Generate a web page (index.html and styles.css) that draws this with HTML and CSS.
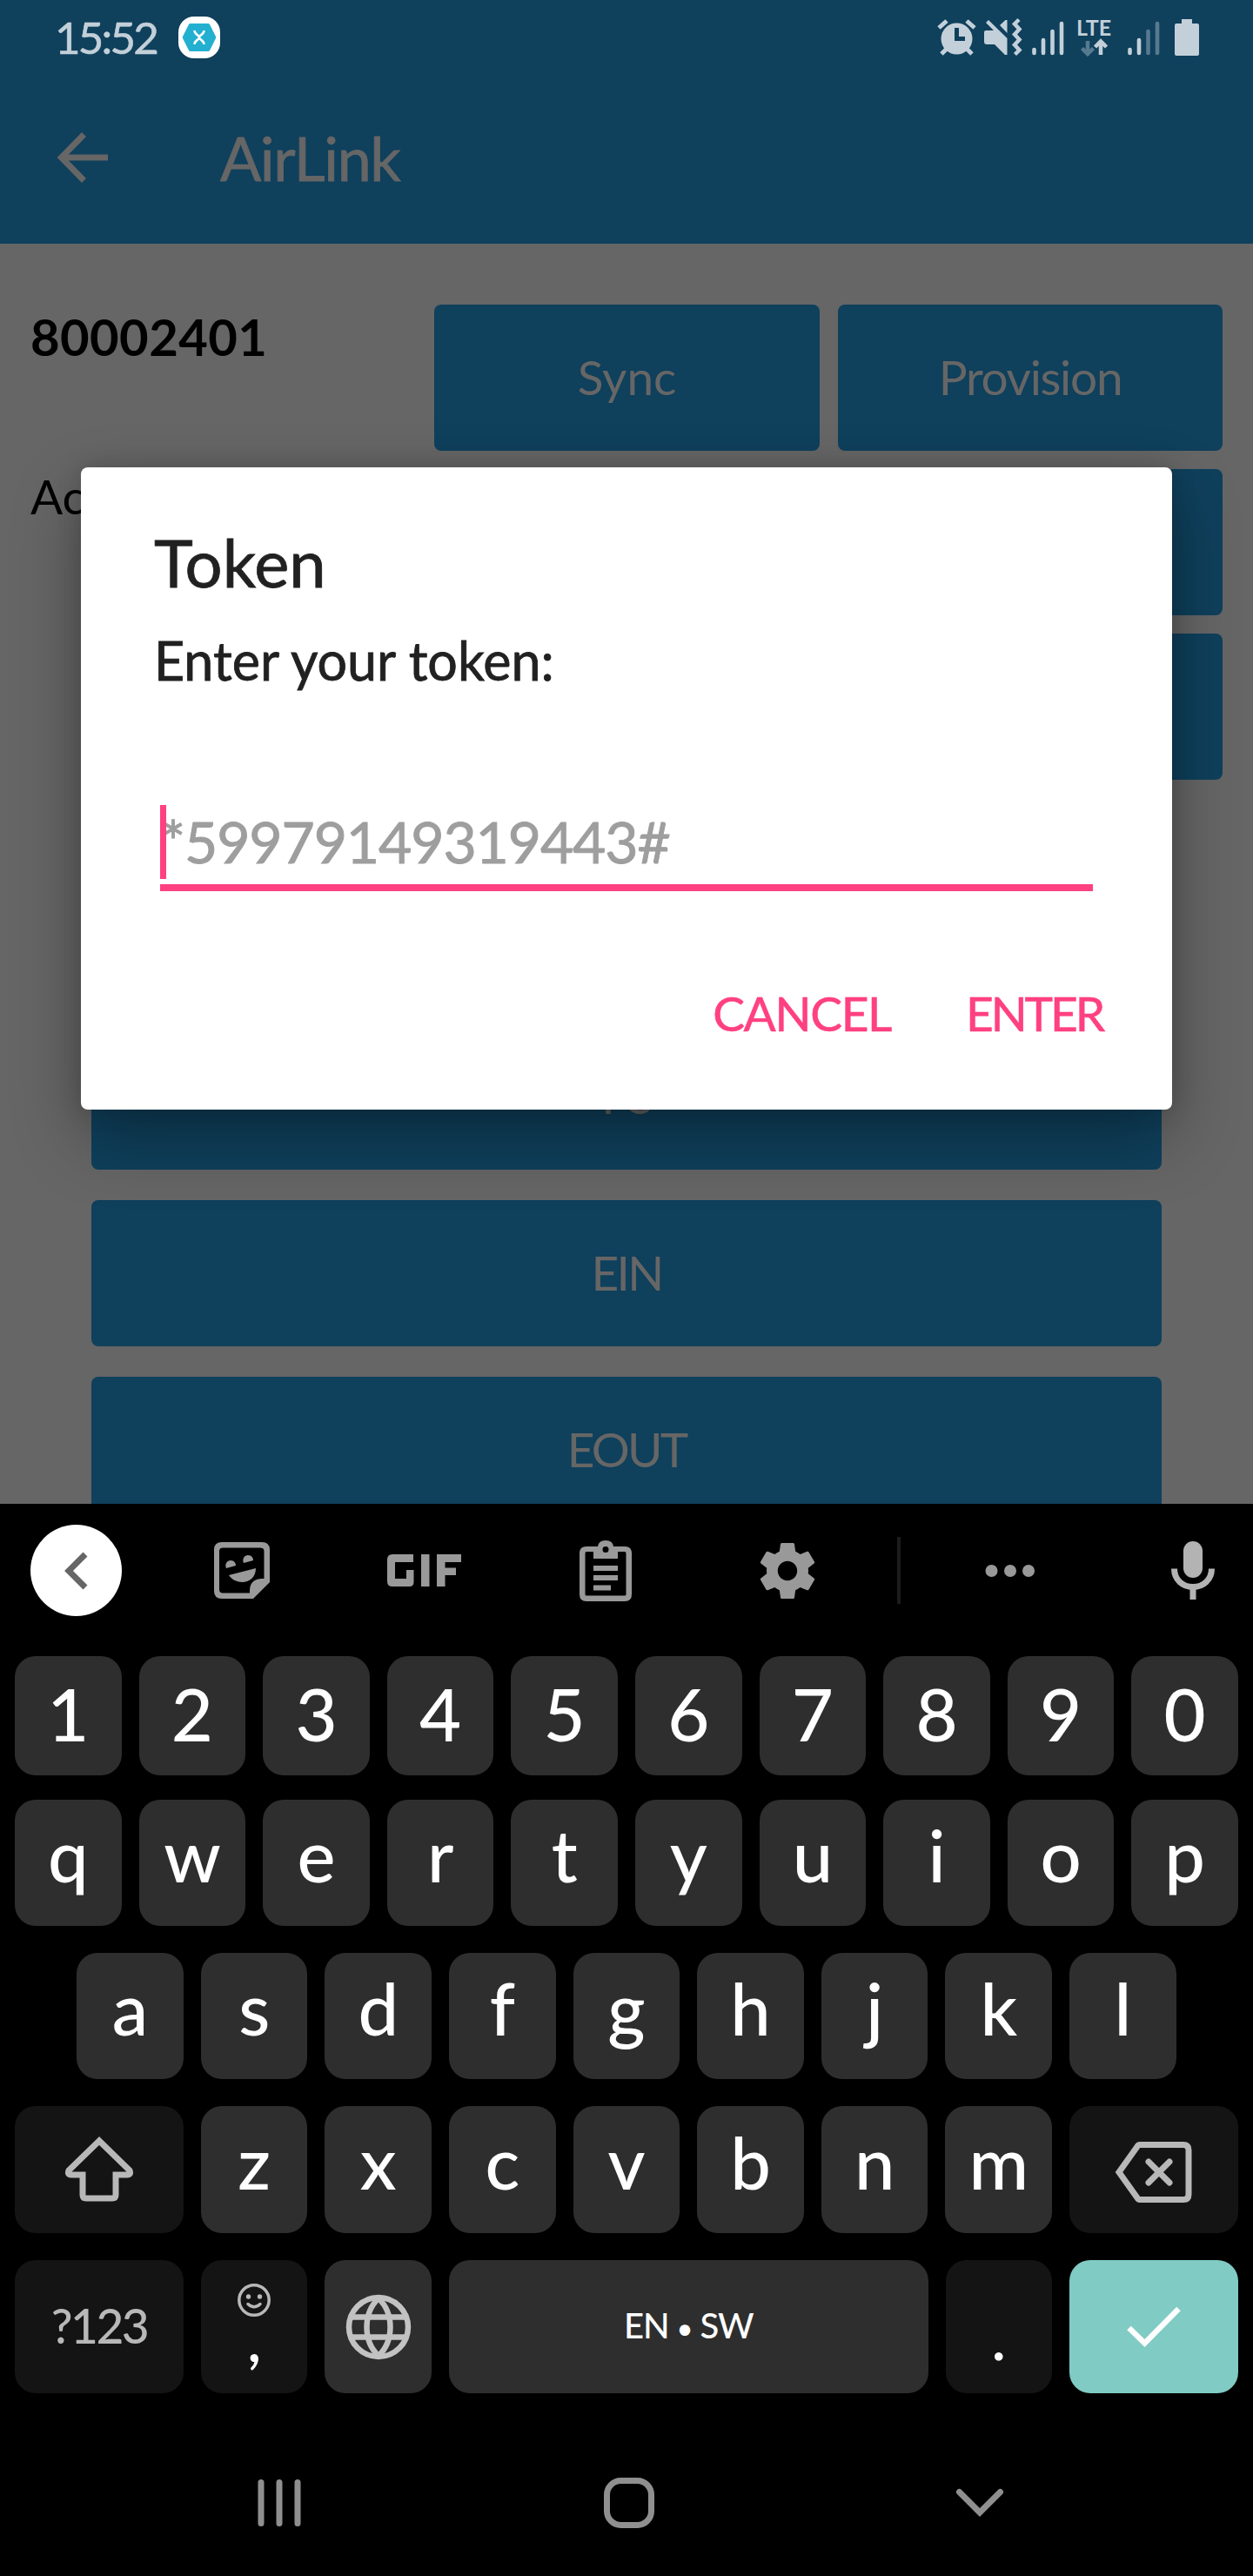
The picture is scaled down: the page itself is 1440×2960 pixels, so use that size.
FILE: index.html
```html
<!DOCTYPE html>
<html lang="en">
<head>
<meta charset="utf-8">
<title>AirLink</title>
<link rel="stylesheet" href="styles.css">
</head>
<body>
<main class="app">
  <header class="top">
    <div class="status">
      <span class="clock">15:52</span>
      <svg class="badge" width="48" height="48" viewBox="0 0 48 48"><rect width="48" height="48" rx="18" fill="#fff"/><path d="M14 8h20q1.500 0 2 1l7 14q.5 1 0 2l-7 14q-.5 1-2 1H14q-1.500 0-2-1L5 25q-.5-1 0-2l7-14q.5-1 2-1z" fill="#23b0d0"/><path d="M18.500 16c0 5 5.500 5 5.500 8s-5.500 3-5.500 8M29.500 16c0 5-5.500 5-5.500 8s5.500 3 5.500 8" fill="none" stroke="#fff" stroke-width="2.500"/></svg>
      <div class="status-icons">
        <svg width="45" height="42" viewBox="0 0 45 42"><circle cx="22.500" cy="22.500" r="18" fill="#c3d0d9"/><path d="M2 10 11 2M34 2l9 8M11 34l-6 6M34 34l6 6" stroke="#c3d0d9" stroke-width="5" fill="none"/><path d="M22.500 10v12.500H32" stroke="#0f405c" stroke-width="5" fill="none"/></svg>
        <svg class="mute" width="43" height="42" viewBox="0 0 43 42"><path d="M2 13h9L2 4l3-3 21.500 21V41H24L12 29H3q-3 0-3-3V15q0-2 2-2zM18 7l6.500-6h2v15z" fill="#c3d0d9"/><path d="M40 1l-5 5 5.500 6-5.500 6 5.500 6-5.500 6 5.500 6-5 5" transform="translate(0 -.5)" stroke="#c3d0d9" stroke-width="4.500" fill="none"/></svg>
        <svg class="signal" width="38" height="42" viewBox="0 0 38 42"><path d="M2.500 35v4M13 24v15M23.500 14v25M34 5v34" stroke="#c3d0d9" stroke-width="4.600" stroke-linecap="round"/></svg>
        <div class="lte"><span>LTE</span>
          <svg width="31" height="20" viewBox="0 0 31 20"><path d="M8 2v15M1.500 10.500 8 17l6.500-6.500" stroke="#577a90" stroke-width="4.500" fill="none"/><path d="M23 18V3M16.500 9 23 2.500 29.500 9" stroke="#c3d0d9" stroke-width="4.500" fill="none"/></svg>
        </div>
        <svg class="signal2" width="38" height="42" viewBox="0 0 38 42"><path d="M2.500 35v4M13 24v15" stroke="#c3d0d9" stroke-width="4.600" stroke-linecap="round"/><path d="M23.500 14v25M34 5v34" stroke="#577a90" stroke-width="4.600" stroke-linecap="round"/></svg>
        <svg class="battery" width="28" height="42" viewBox="0 0 28 42"><path d="M8 0h12v5h6q2 0 2 2v33q0 2-2 2H2q-2 0-2-2V7q0-2 2-2h6z" fill="#c3d0d9"/></svg>
      </div>
    </div>
    <div class="toolbar">
      <svg width="58" height="58" viewBox="0 0 58 58"><path d="M57 29H6M29.500 2.500 3.500 29l26 26.500" stroke="#666" stroke-width="7" fill="none"/></svg>
      <h1>AirLink</h1>
    </div>
  </header>

  <section class="content">
    <div class="meter">
      <div class="info"><strong>80002401</strong><span>Active</span></div>
      <div class="actions">
        <button class="btn">Sync</button><button class="btn prov">Provision</button>
        <button class="btn"></button><button class="btn"></button>
        <button class="btn"></button><button class="btn"></button>
      </div>
    </div>
    <div class="list">
      <button class="btn">PS</button>
      <button class="btn">EIN</button>
      <button class="btn">EOUT</button>
    </div>
  </section>

  <div class="dialog" role="dialog">
    <h2>Token</h2>
    <p>Enter your token:</p>
    <div class="field"><span class="hint">*59979149319443#</span><span class="caret"></span></div>
    <div class="dialog-actions"><span class="cancel">CANCEL</span><span class="enter">ENTER</span></div>
  </div>
</main>

<section class="keyboard">
  <div class="tools">
    <span class="back"><svg width="28" height="44" viewBox="0 0 28 44"><path d="M24 3 5 22l19 19" stroke="#666" stroke-width="7" fill="none"/></svg></span>
    <svg class="sticker" width="66" height="66" viewBox="0 0 66 66"><path fill="#999" fill-rule="evenodd" d="M10 0h46q9 0 9 9v37L46 65H10q-9 0-9-9V9q0-9 9-9zm1 6.500q-4 0-4 4v44q0 4 4 4h31V56q0-13 13-14h3.500V10.500q0-4-4-4z"/><path fill="#999" d="M15 30c-2-5 1-9 5-9s6 3 6 6zM35 24c-2-5 1-9 5-9s6 3 6 6zM18 38l31-8c0 18-22 21-31 8z"/></svg>
    <svg class="gif" width="85" height="38" viewBox="0 0 85 38"><path fill="#999" d="M6 0h24v9H9v19h13V18h8.500v14q0 5-5 5H6q-6 0-6-6V6q0-6 6-6zM39 0h9.500v37H39zM57 0h28v9H66.500v6.500H79V24H66.500v13H57z"/></svg>
    <svg class="clip" width="60" height="70" viewBox="0 0 60 70"><path fill="#999" fill-rule="evenodd" d="M8 7h13q1-7 9-7t9 7h13q8 0 8 8v47q0 8-8 8H8q-8 0-8-8V15q0-8 8-8zm0 6q-1.500 0-1.500 2v47q0 1.500 1.500 1.500h44q1.500 0 1.500-1.500V15q0-2-1.500-2h-8v8H16v-8zM30 7a3.500 3.500 0 1 0 0 7 3.500 3.500 0 0 0 0-7z"/><path fill="#999" d="M16 29h28v6H16zM16 40h28v6H16zM16 51.500h20v6H16z"/></svg>
    <svg class="gear" width="64" height="64" viewBox="2 2 20 20"><path fill="#999" d="M19.430 12.980c.04-.32.070-.64.070-.98s-.03-.66-.07-.98l2.110-1.650c.19-.15.240-.42.120-.64l-2-3.460c-.12-.22-.39-.3-.61-.22l-2.490 1c-.52-.4-1.080-.73-1.690-.98l-.38-2.650C14.460 2.180 14.250 2 14 2h-4c-.25 0-.46.180-.49.420l-.38 2.650c-.61.250-1.170.590-1.690.980l-2.490-1c-.23-.09-.49 0-.61.220l-2 3.460c-.13.220-.07.490.120.640l2.110 1.650c-.04.320-.07.650-.07.980s.03.660.070.980l-2.110 1.650c-.19.150-.24.420-.12.640l2 3.460c.12.220.390.300.610.220l2.490-1c.52.400 1.080.730 1.690.980l.38 2.650c.03.240.240.420.490.420h4c.25 0 .46-.18.490-.42l.38-2.650c.61-.25 1.170-.59 1.690-.98l2.490 1c.23.090.490 0 .61-.22l2-3.460c.12-.22.070-.49-.12-.64l-2.110-1.650zM12 15.500c-1.930 0-3.500-1.570-3.500-3.500s1.570-3.500 3.500-3.500 3.500 1.570 3.500 3.500-1.570 3.500-3.500 3.500z"/></svg>
    <span class="rule"></span>
    <svg class="dots" width="58" height="14" viewBox="0 0 58 14" fill="#999"><circle cx="7.500" cy="7" r="7"/><circle cx="29" cy="7" r="7"/><circle cx="50" cy="7" r="7"/></svg>
    <svg class="mic" width="50" height="67" viewBox="0 0 50 67"><rect x="14" width="22" height="42" rx="11" fill="#b3b3b3"/><path d="M3.500 31.500C3.500 44 13 52.500 25 52.500S46.500 44 46.500 31.500M25 52v15" fill="none" stroke="#b3b3b3" stroke-width="7"/></svg>
  </div>

  <div class="row digits"><b>1</b><b>2</b><b>3</b><b>4</b><b>5</b><b>6</b><b>7</b><b>8</b><b>9</b><b>0</b></div>
  <div class="row"><b>q</b><b>w</b><b>e</b><b>r</b><b>t</b><b>y</b><b>u</b><b>i</b><b>o</b><b>p</b></div>
  <div class="row home-row"><b>a</b><b>s</b><b>d</b><b>f</b><b>g</b><b>h</b><b>j</b><b>k</b><b>l</b></div>
  <div class="row third">
    <b class="wide dark"><svg width="80" height="76" viewBox="0 0 80 76"><path d="M40 5 5 39q-2 5 3 5h13v23q0 4 4 4h30q4 0 4-4V44h13q5 0 3-5z" fill="none" stroke="#b8b8b8" stroke-width="7"/></svg></b>
    <b>z</b><b>x</b><b>c</b><b>v</b><b>b</b><b>n</b><b>m</b>
    <b class="wide dark"><svg class="del" width="88" height="70" viewBox="0 0 88 70"><path d="M28 3.500h50q6 0 6 6v51q0 6-6 6H28q-2 0-3-2L4 35 25 5.500q1-2 3-2z" fill="none" stroke="#b8b8b8" stroke-width="7"/><path d="m38 23 24 24M62 23 38 47" stroke="#b8b8b8" stroke-width="7" stroke-linecap="round"/></svg></b>
  </div>
  <div class="row last">
    <b class="wide dark sym">?123</b>
    <b class="dark punct"><svg width="38" height="38" viewBox="0 0 38 38"><circle cx="19" cy="19" r="17.200" fill="none" stroke="#b8b8b8" stroke-width="3.500"/><circle cx="12.500" cy="15" r="2.700" fill="#b8b8b8"/><circle cx="25.500" cy="15" r="2.700" fill="#b8b8b8"/><path d="M12 23.500q7 6.500 14 0" fill="none" stroke="#b8b8b8" stroke-width="3.500" stroke-linecap="round"/></svg><i>,</i></b>
    <b class="globe"><svg width="76" height="76" viewBox="0 0 76 76" fill="none" stroke="#c2c2c2" stroke-width="6.500"><circle cx="38" cy="38" r="34"/><path d="M38 5C20 22 20 54 38 71M38 5c18 17 18 49 0 66M7 26.500h62M7 49.500h62"/></svg></b>
    <b class="space"><span>EN <small>•</small> SW</span></b>
    <b class="dark punct dot"><i>.</i></b>
    <b class="wide go"><svg width="62" height="47" viewBox="0 0 62 47"><path d="M2.500 25 20.500 42.500 59.500 3" fill="none" stroke="#fff" stroke-width="6.500"/></svg></b>
  </div>
</section>

<nav class="nav">
  <svg width="50" height="54" viewBox="0 0 50 54"><path d="M4 3.500v47M25 3.500v47M46 3.500v47" stroke="#8f8f8f" stroke-width="7" stroke-linecap="round"/></svg>
  <svg width="58" height="58" viewBox="0 0 58 58"><rect x="3.500" y="3.500" width="51" height="51" rx="16" fill="none" stroke="#8f8f8f" stroke-width="7"/></svg>
  <svg width="54" height="32" viewBox="0 0 54 32"><path d="M3.500 3.500 27 27 50.500 3.500" fill="none" stroke="#8f8f8f" stroke-width="7" stroke-linecap="round"/></svg>
</nav>
</body>
</html>
```
FILE: styles.css
```css
* { box-sizing: border-box; margin: 0; padding: 0; }
body {
  width: 1440px;
  height: 2960px;
  overflow: hidden;
  background: #000;
  font-family: Lato, "Open Sans", sans-serif;
  font-kerning: normal;
}
svg { display: block; flex: none; overflow: visible; }

.app { position: relative; height: 1728px; overflow: hidden; background: #666; }
.top { height: 280px; background: #0f405c; color: #666; }
.status { display: flex; align-items: center; height: 86px; padding: 0 62px 0 63px; }
.clock { width: 142px; font-size: 51px; line-height: 60px; color: #c3d0d9; letter-spacing: -2.8px; -webkit-text-stroke: .6px; }
.status-icons { display: flex; align-items: center; margin-left: auto; }
.mute { margin-left: 9px; }
.signal { margin-left: 12px; }
.lte { display: flex; flex-direction: column; align-items: center; width: 42px; height: 44px; margin-left: 12px; }
.lte span { font-size: 25px; font-weight: 700; line-height: 20px; margin-bottom: 4px; color: #c3d0d9; }
.signal2 { margin-left: 18px; }
.battery { margin-left: 16px; }
.toolbar { display: flex; align-items: center; height: 190px; padding-left: 67px; }
h1 { margin-left: 128px; font-size: 70px; line-height: 84px; font-weight: 400; letter-spacing: -1.4px; -webkit-text-stroke: .8px; }

.content { padding: 70px 35px 0; }
.meter { display: flex; justify-content: space-between; }
.info { display: flex; flex-direction: column; font-size: 55px; line-height: 66px; color: #000; }
.info strong { margin-top: 2px; font-size: 58px; line-height: 70px; margin-bottom: 115px; letter-spacing: .4px; }
.actions { display: grid; grid-template-columns: 443px 442px; gap: 21px; }
.btn {
  height: 168px;
  padding-bottom: 3px;
  border: 0;
  border-radius: 8px;
  background: #0f405c;
  color: #666;
  font: 400 55px/66px Lato, sans-serif;
}
.prov { letter-spacing: -1.3px; }
.list { display: flex; flex-direction: column; gap: 35px; margin: 280px 70px 0; }
.list .btn { letter-spacing: -2.8px; }

.dialog {
  position: absolute;
  left: 93px;
  top: 537px;
  width: 1254px;
  height: 738px;
  padding: 64px 83px 0 85px;
  border-radius: 8px;
  background: #fff;
  color: #212121;
  box-shadow: 0 32px 80px rgba(0, 0, 0, .32), 0 0 28px rgba(0, 0, 0, .16);
}
h2 { margin-left: -1px; font-size: 76px; line-height: 90px; font-weight: 400; -webkit-text-stroke: .8px; }
.dialog p { margin: 31px 0 0 -1px; font-size: 61px; line-height: 74px; -webkit-text-stroke: .8px; }
.field { position: relative; width: 1072px; height: 101px; margin: 127px 0 0 6px; border-bottom: 8px solid #ff4081; }
.caret { position: absolute; left: 0; top: 2px; width: 7px; height: 85px; background: #ff4081; }
.hint { display: block; margin-left: 1px; padding-top: 1px; font-size: 66px; line-height: 86px; color: #9e9e9e; letter-spacing: -1.100px; -webkit-text-stroke: 1px; }
.dialog-actions { display: flex; justify-content: flex-end; gap: 86px; margin-top: 107px; font-size: 55px; line-height: 66px; color: #ff4081; -webkit-text-stroke: .6px; }
.cancel { letter-spacing: -1.3px; }
.enter { letter-spacing: -3.1px; margin-right: -3px; }

.keyboard { display: flex; flex-direction: column; height: 1057px; padding: 0 17px; }
.tools { display: flex; align-items: center; height: 153px; margin-bottom: 22px; padding-left: 18px; }
.back { display: flex; align-items: center; justify-content: center; width: 105px; height: 105px; border-radius: 50%; background: #fff; }
.sticker { margin-left: 105px; }
.gif { margin-left: 134px; }
.clip { margin-left: 136px; }
.gear { margin-left: 147px; }
.rule { width: 4px; height: 77px; margin-left: 94px; background: #1c1c1c; }
.dots { margin-left: 97px; }
.mic { margin-left: 156px; }

.row { display: grid; grid-template-columns: repeat(20, 1fr); column-gap: 20px; height: 145px; margin-bottom: 31px; color: #fff; }
.row b {
  grid-column: span 2;
  display: flex;
  align-items: center;
  justify-content: center;
  min-width: 0;
  padding-bottom: 19px;
  border-radius: 24px;
  background: #2e2e2e;
  font-size: 83px;
  font-weight: 500;
  line-height: 100px;
}
.digits { height: 137px; margin-bottom: 28px; }
.row.digits b { padding-bottom: 5px; }
.home-row b:first-child { grid-column: 2 / span 2; }
.third { height: 146px; }
.row b.wide { grid-column: span 3; padding-bottom: 0; }
.row b.dark { background: #141414; }
.del { margin-top: 6px; }
.last { height: 153px; }
.row b.sym { padding-bottom: 3px; color: #b8b8b8; font-size: 55px; letter-spacing: -2.500px; }
.row b.punct { flex-direction: column; justify-content: flex-start; padding: 27px 0 0; font-size: 72px; }
.punct i { font-style: normal; line-height: 60px; margin-top: -6px; }
.punct.dot i { margin-top: 30px; }
.row b.globe { padding: 0; }
.row b.space { grid-column: span 8; padding: 0; font-size: 40px; letter-spacing: -1px; }
.space small { font-size: 32px; }
.row b.go { background: #80cbc4; }

.nav { display: flex; align-items: center; height: 175px; padding: 6px 287px 0 296px; justify-content: space-between; }
```
